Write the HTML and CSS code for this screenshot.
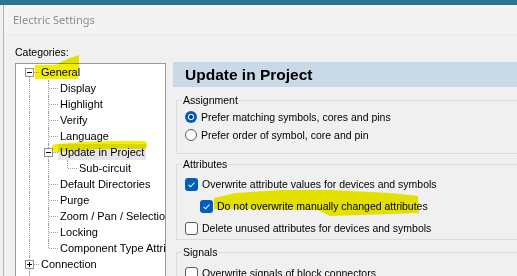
FILE: index.html
```html
<!DOCTYPE html>
<html lang="en">
<head>
    <meta charset="UTF-8">
    <meta name="viewport" content="width=device-width, initial-scale=1.0">
    <title>Electric Settings</title>
    <link rel="stylesheet" href="styles.css">
</head>
<body>
    <div class="topbar"></div>

    <div class="window">
        <div class="titlebar">Electric Settings</div>

        <div class="content">
            <!-- category tree -->
            <div class="left">
                <div class="cat-label">Categories:</div>
                <div class="tree">
                    <div class="row"><span class="g first"><span class="box"></span></span><span class="label">General</span></div>
                    <div class="row"><span class="g v"></span><span class="g t"></span><span class="label">Display</span></div>
                    <div class="row"><span class="g v"></span><span class="g t"></span><span class="label">Highlight</span></div>
                    <div class="row"><span class="g v"></span><span class="g t"></span><span class="label">Verify</span></div>
                    <div class="row"><span class="g v"></span><span class="g t"></span><span class="label">Language</span></div>
                    <div class="row"><span class="g v"></span><span class="g t"><span class="box"></span></span><span class="label selected">Update in Project</span></div>
                    <div class="row"><span class="g v"></span><span class="g v"></span><span class="g l"></span><span class="label">Sub-circuit</span></div>
                    <div class="row"><span class="g v"></span><span class="g t"></span><span class="label">Default Directories</span></div>
                    <div class="row"><span class="g v"></span><span class="g t"></span><span class="label">Purge</span></div>
                    <div class="row"><span class="g v"></span><span class="g t"></span><span class="label">Zoom / Pan / Selection</span></div>
                    <div class="row"><span class="g v"></span><span class="g t"></span><span class="label">Locking</span></div>
                    <div class="row"><span class="g v"></span><span class="g l"></span><span class="label">Component Type Attributes</span></div>
                    <div class="row"><span class="g t"><span class="box plus"></span></span><span class="label">Connection</span></div>
                    <div class="row"><span class="g v"></span></div>
                </div>
            </div>

            <!-- settings page -->
            <div class="right">
                <div class="page-header">Update in Project</div>

                <div class="group">
                    <div class="group-title">Assignment</div>
                    <div class="opt radio-row">
                        <svg class="radio" width="12" height="12" viewBox="0 0 12 12"><circle cx="6" cy="6" r="6" fill="#005fb8"/><circle cx="6" cy="6" r="3" fill="#fff"/><circle cx="6" cy="6" r="2" fill="#0a2f55"/></svg>
                        <span>Prefer matching symbols, cores and pins</span>
                    </div>
                    <div class="opt radio-row last">
                        <svg class="radio" width="12" height="12" viewBox="0 0 12 12"><circle cx="6" cy="6" r="5.5" fill="#fbfbfb" stroke="#5c5c5c"/></svg>
                        <span>Prefer order of symbol, core and pin</span>
                    </div>
                </div>

                <div class="group">
                    <div class="group-title">Attributes</div>
                    <div class="opt check-row">
                        <svg class="check" width="13" height="13" viewBox="0 0 13 13"><rect width="13" height="13" rx="3" fill="#005fb8"/><path d="M3.6 6.9 L5.6 8.8 L9.5 4.5" fill="none" stroke="#fff" stroke-width="1.1"/></svg>
                        <span>Overwrite attribute values for devices and symbols</span>
                    </div>
                    <div class="opt check-row sub">
                        <svg class="check" width="13" height="13" viewBox="0 0 13 13"><rect width="13" height="13" rx="3" fill="#005fb8"/><path d="M3.6 6.9 L5.6 8.8 L9.5 4.5" fill="none" stroke="#fff" stroke-width="1.1"/></svg>
                        <span>Do not overwrite manually changed attributes</span>
                    </div>
                    <div class="opt check-row">
                        <svg class="check" width="13" height="13" viewBox="0 0 13 13"><rect x="0.5" y="0.5" width="12" height="12" rx="2.5" fill="#fbfbfb" stroke="#5c5c5c"/></svg>
                        <span>Delete unused attributes for devices and symbols</span>
                    </div>
                </div>

                <div class="group signals">
                    <div class="group-title">Signals</div>
                    <div class="opt check-row">
                        <svg class="check" width="13" height="13" viewBox="0 0 13 13"><rect x="0.5" y="0.5" width="12" height="12" rx="2.5" fill="#fbfbfb" stroke="#5c5c5c"/></svg>
                        <span>Overwrite signals of block connectors</span>
                    </div>
                </div>
            </div>
        </div>
    </div>

    <!-- highlighter marks drawn over the screenshot -->
    <svg class="marks" width="517" height="276" viewBox="0 0 517 276">
        <path d="M35 65 L55 65 L70 58 L79 55 L79 70 L78 79 L35 79 Z" fill="#f2ee00"/>
        <path d="M56 148 Q100 144 143 145" fill="none" stroke="#f2ee00" stroke-width="8" stroke-linecap="round"/>
        <path d="M214 198 L236 193 L280 190 L330 190 L390 193 L418 196 L419 213 L330 216 L318 210 L240 209 L214 209 Z" fill="#f2ee00"/>
    </svg>
</body>
</html>
```

FILE: styles.css
```css
body {
    margin: 0;
    height: 276px;
    overflow: hidden;
    background-color: #f0f0f0;
    font-family: "Liberation Sans", Arial, sans-serif;
    font-size: 11px;
    color: #000;
}

.topbar {
    height: 5px;
    background-color: #2c7590;
}

.window {
    margin-left: 3px;
    border-left: 1px solid #b4b4b4;
    height: 271px;
}

.titlebar {
    height: 29px;
    line-height: 29px;
    padding-left: 9px;
    background-color: #f3f3f3;
    border-bottom: 1px solid #ebebeb;
    font-family: "Noto Sans", sans-serif;
    font-size: 11px;
    color: #8c8c8c;
}

.content {
    display: flex;
    padding-left: 11px;
}

.left {
    width: 151px;
    padding-top: 11px;
}

.cat-label {
    line-height: 13px;
    margin-bottom: 4px;
    font-size: 10.5px;
}

.tree {
    height: 240px;
    padding-left: 4px;
    background-color: #fff;
    border: 1px solid #9a9a9a;
    overflow: hidden;
}

.row {
    display: flex;
    height: 16px;
    line-height: 16px;
    white-space: nowrap;
}

.g {
    position: relative;
    flex: none;
    width: 19px;
    height: 16px;
}

.g::before,
.g::after {
    content: "";
    position: absolute;
}

.g.v::before,
.g.t::before {
    left: 9px;
    top: 0;
    bottom: 0;
    border-left: 1px dotted #a0a0a0;
}

.g.l::before {
    left: 9px;
    top: 0;
    height: 8px;
    border-left: 1px dotted #a0a0a0;
}

.g.first::before {
    left: 9px;
    top: 8px;
    bottom: 0;
    border-left: 1px dotted #a0a0a0;
}

.g.t::after,
.g.l::after,
.g.first::after {
    left: 10px;
    right: 0;
    top: 8px;
    border-top: 1px dotted #a0a0a0;
}

.box {
    position: absolute;
    left: 5px;
    top: 4px;
    width: 7px;
    height: 7px;
    border: 1px solid #919191;
    background-color: #fff;
    z-index: 1;
}

.box::before {
    content: "";
    position: absolute;
    left: 1px;
    top: 3px;
    width: 5px;
    height: 1px;
    background-color: #000;
}

.box.plus::after {
    content: "";
    position: absolute;
    left: 3px;
    top: 1px;
    width: 1px;
    height: 5px;
    background-color: #000;
}

.label {
    padding: 0 2px;
}

.label.selected {
    background-color: #e6e6e6;
}

.right {
    flex: 1;
    padding-top: 27px;
    margin-left: 7px;
    margin-right: -30px;
    font-size: 10.5px;
}

.page-header {
    height: 25px;
    line-height: 25px;
    padding-left: 12px;
    background-color: #c9d9e8;
    font-size: 15.5px;
    font-weight: bold;
}

.group {
    margin-left: 3px;
    margin-top: 13px;
    border: 1px solid #dcdcdc;
}

.group + .group {
    margin-top: 10px;
}

.group.signals {
    margin-top: 12px;
}

.group-title {
    width: fit-content;
    margin: -7px 0 0 5px;
    padding: 0 1px;
    line-height: 13px;
    background-color: #f0f0f0;
}

.opt {
    display: flex;
    align-items: center;
    gap: 4px;
    padding-left: 8px;
    white-space: nowrap;
}

.radio-row {
    height: 18px;
}

.group-title + .radio-row {
    margin-top: 1px;
}

.radio-row.last {
    margin-bottom: 9px;
}

.check-row {
    height: 22px;
}

.group-title + .check-row {
    margin-top: 2px;
}

.check-row.sub {
    padding-left: 23px;
}

.signals .group-title + .check-row {
    margin-top: 3px;
}

.radio,
.check {
    flex: none;
}

.marks {
    position: absolute;
    left: 0;
    top: 0;
    pointer-events: none;
    mix-blend-mode: multiply;
}
```
